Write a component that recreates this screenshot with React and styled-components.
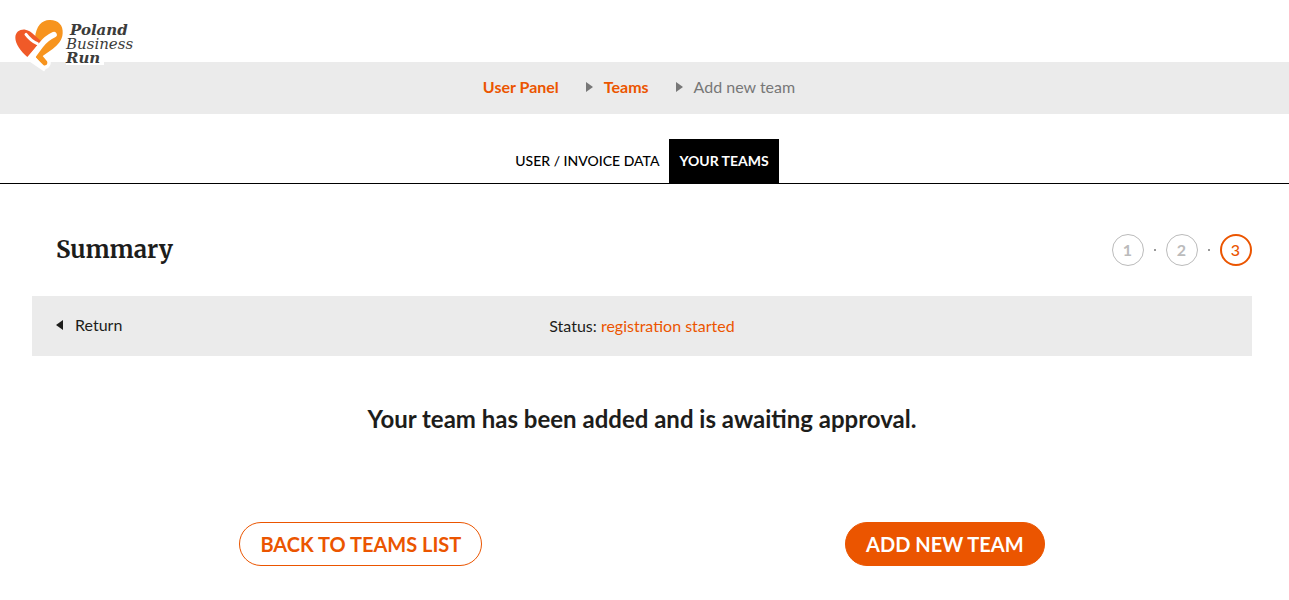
import React from "react";
import styled, { createGlobalStyle, css } from "styled-components";

const orange = "#eb5500";
const ink = "#1d1d1b";
const grey = "#ebebeb";

const GlobalStyle = createGlobalStyle`
  * { box-sizing: border-box; }
  body {
    margin: 0;
    background: #fff;
    color: ${ink};
    font-family: Lato, "Open Sans", sans-serif;
    font-size: 16px;
    line-height: 24px;
  }
  a { color: inherit; text-decoration: none; }
`;

const Header = styled.header`
  position: relative;
  height: 62px;
`;

const Logo = styled.a`
  position: absolute;
  top: 10px;
  left: 0;
  z-index: 1;
  display: flex;
`;

const LogoMark = styled.svg`
  width: 64px;
  height: 70px;
`;

const LogoText = styled.span`
  display: flex;
  flex-direction: column;
  align-items: flex-start;
  padding: 13px 0 0 2px;
  color: #3c3c3b;
  font: italic 15px/14px "DejaVu Serif", serif;
`;

const LogoLine = styled.span`
  font-weight: ${(p) => (p.$strong ? 700 : 400)};
  padding-left: ${(p) => (p.$indent ? 4 : 0)}px;
  padding-right: 4px;
  background: ${(p) => (p.$plate ? "#fff" : "none")};
`;

const Breadcrumbs = styled.nav`
  display: flex;
  justify-content: center;
  align-items: center;
  height: 52px;
  padding: 0 11px 2px 0;
  background: ${grey};
  color: #777;
`;

const CrumbLink = styled.a`
  color: ${orange};
  font-weight: 700;
`;

const Arrow = styled.svg`
  width: 7px;
  height: 10px;
  fill: currentColor;
`;

const CrumbArrow = styled(Arrow)`
  margin: 0 11px 0 27px;
`;

const Tabs = styled.nav`
  display: flex;
  justify-content: center;
  margin-top: 25px;
  padding-right: 5px;
  border-bottom: 1px solid #000;
`;

const Tab = styled.a`
  padding: 10px;
  color: #000;
  font-size: 14px;
  font-weight: 500;
  text-transform: uppercase;
  ${(p) =>
    p.$active &&
    css`
      background: #000;
      color: #fff;
      font-weight: 700;
    `}
`;

const Main = styled.main`
  padding: 50px 37px 34px 32px;
`;

const TitleRow = styled.div`
  display: flex;
  justify-content: space-between;
  align-items: center;
  padding-left: 24px;
`;

const Title = styled.h1`
  margin: 0;
  font: 700 24px/32px "Merriweather", "DejaVu Serif Condensed", "DejaVu Serif", serif;
`;

const Steps = styled.ol`
  display: flex;
  align-items: center;
  margin: 0;
  padding: 0;
  list-style: none;
`;

const Step = styled.li`
  display: flex;
  align-items: center;

  & + &::before {
    content: "";
    width: 2px;
    height: 2px;
    margin: 0 10px;
    background: #999;
  }
`;

const StepNumber = styled.span`
  display: flex;
  justify-content: center;
  align-items: center;
  width: 32px;
  height: 32px;
  padding-right: 1px;
  border: ${(p) => (p.$current ? `2px solid ${orange}` : "1px solid #bbb")};
  border-radius: 50%;
  color: ${(p) => (p.$current ? orange : "#bbb")};
  font-weight: ${(p) => (p.$current ? 500 : 700)};
`;

const StatusBar = styled.div`
  display: grid;
  grid-template-columns: 1fr auto 1fr;
  align-items: center;
  height: 60px;
  margin-top: 30px;
  padding: 0 24px;
  background: ${grey};
`;

const Return = styled.a`
  display: flex;
  align-items: center;
  gap: 12px;
  padding-bottom: 2px;
`;

const StatusValue = styled.span`
  color: ${orange};
`;

const Message = styled.h2`
  margin: 47px 0 0;
  font-size: 24px;
  font-weight: 700;
  line-height: 32px;
  text-align: center;
`;

const Actions = styled.div`
  display: flex;
  justify-content: space-between;
  margin-top: 87px;
  padding: 0 17%;
`;

const Button = styled.button`
  height: 44px;
  padding: 0 20px;
  border: 1px solid ${orange};
  border-radius: 22px;
  background: ${(p) => (p.$filled ? orange : "#fff")};
  color: ${(p) => (p.$filled ? "#fff" : orange)};
  font: 700 20px/24px Lato, sans-serif;
  text-transform: uppercase;
  cursor: pointer;
`;

const RightArrow = () => (
  <CrumbArrow viewBox="0 0 7 10" aria-hidden="true">
    <path d="M0 0L7 5L0 10Z" />
  </CrumbArrow>
);

const heartLeft =
  "M82 141C62 124 46 101 46 83C46 66 60 57 76 59C87 61 94 66 102 74L124 94L107 112Z";
const heartRight =
  "M105 84C108 48 126 30 148 30C174 29 190 45 188 70C187 92 172 106 158 117L128 138L141 154C145 162 137 170 130 165L108 143C105 139 107 136 111 132L120 100Z";

function HeartLogo() {
  return (
    <LogoMark viewBox="0 0 192 210" aria-hidden="true">
      <g fill="#fff" stroke="#fff" strokeWidth="20" strokeLinejoin="round">
        <path d={heartLeft} />
        <path d={heartRight} />
        <path d="M85 140L138 176" />
      </g>
      <path d={heartRight} fill="#f7941e" />
      <path d={heartLeft} fill="#f05a28" />
      <g fill="none" stroke="#fff" strokeLinecap="round">
        <path d="M78 73Q92 92 112 101" strokeWidth="9" />
        <path d="M162 74Q140 84 124 104L94 144" strokeWidth="17" />
        <path d="M98 138L124 170" strokeWidth="9" />
      </g>
    </LogoMark>
  );
}

export default function App() {
  return (
    <>
      <GlobalStyle />
      <Header>
        <Logo href="#home" aria-label="Poland Business Run">
          <HeartLogo />
          <LogoText>
            <LogoLine $strong $indent>Poland</LogoLine>
            <LogoLine>Business</LogoLine>
            <LogoLine $strong $plate>Run</LogoLine>
          </LogoText>
        </Logo>
      </Header>
      <Breadcrumbs aria-label="Breadcrumb">
        <CrumbLink href="#panel">User Panel</CrumbLink>
        <RightArrow />
        <CrumbLink href="#teams">Teams</CrumbLink>
        <RightArrow />
        <span>Add new team</span>
      </Breadcrumbs>
      <Tabs>
        <Tab href="#data">User / invoice data</Tab>
        <Tab href="#teams" $active aria-current="page">Your teams</Tab>
      </Tabs>
      <Main>
        <TitleRow>
          <Title>Summary</Title>
          <Steps>
            <Step><StepNumber>1</StepNumber></Step>
            <Step><StepNumber>2</StepNumber></Step>
            <Step aria-current="step"><StepNumber $current>3</StepNumber></Step>
          </Steps>
        </TitleRow>
        <StatusBar>
          <Return href="#back">
            <Arrow viewBox="0 0 7 10" aria-hidden="true">
              <path d="M7 0L0 5L7 10Z" />
            </Arrow>
            Return
          </Return>
          <div>
            Status: <StatusValue>registration started</StatusValue>
          </div>
        </StatusBar>
        <Message>Your team has been added and is awaiting approval.</Message>
        <Actions>
          <Button type="button">Back to teams list</Button>
          <Button type="button" $filled>Add new team</Button>
        </Actions>
      </Main>
    </>
  );
}
